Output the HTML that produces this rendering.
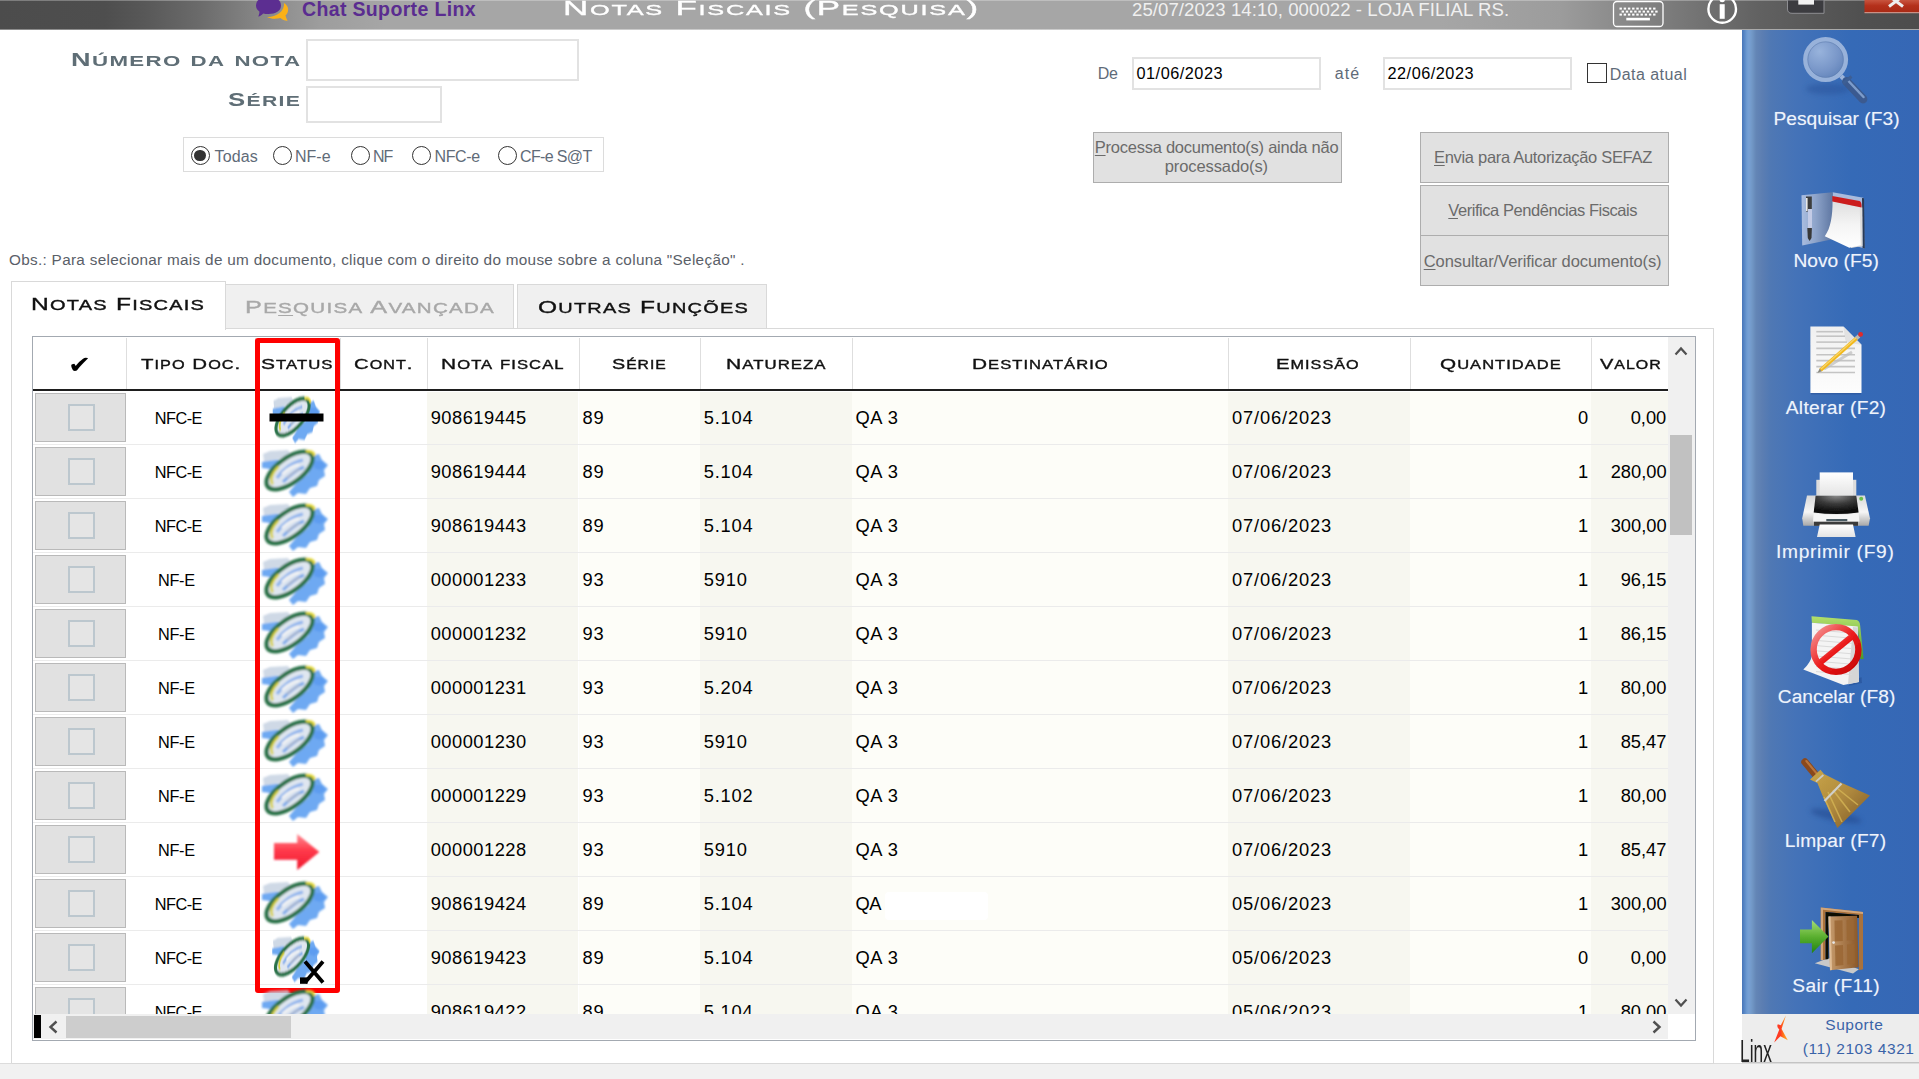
<!DOCTYPE html>
<html lang="pt-BR"><head><meta charset="utf-8"><title>Notas Fiscais (Pesquisa)</title>
<style>
html,body{margin:0;padding:0}
body{width:1919px;height:1079px;overflow:hidden;background:#fff;position:relative;font-family:"Liberation Sans",sans-serif}
.a{position:absolute;box-sizing:border-box}
.t{position:absolute;white-space:nowrap;line-height:0;height:0;transform-origin:0 0}
.t u{text-decoration-thickness:1px;text-underline-offset:2px}
#titlebar{left:0;top:0;width:1919px;height:29px;border-top:1px solid rgba(255,255,255,.28);background:linear-gradient(to right,#4c4c4c 0,#4e4e4e 105px,#585858 145px,#6b6b6b 200px,#878787 260px,#9d9d9d 320px,#a6a6a6 385px,#a6a6a6 1440px,#9c9c9c 1560px,#7e7e7e 1660px,#616161 1760px,#505050 1860px,#4d4d4d 1919px)}
#titleedge{left:0;top:29px;width:1919px;height:1px;background:linear-gradient(to right,#8c8c8c 0,#8d8d8d 105px,#9e9e9e 200px,#bcbcbc 280px,#cacaca 385px,#cbcbcb 1440px,#c4c4c4 1560px,#a9a9a9 1660px)}
.inp{background:#fff;border:2px solid #e2e2e2}
.btn{background:#e1e1e1;border:1px solid #adadad}
.radio{width:19px;height:19px;border-radius:50%;border:1.9px solid #333;background:#fff}
.tab{background:#f0f0f0;border:1px solid #d9d9d9;border-bottom:none}
#grid{left:32px;top:336px;width:1664px;height:705px;border:1px solid #a3a9b1;background:#fff;overflow:hidden}
.colbg{top:55px;height:623px}
.hsep{top:1px;width:1px;height:52px;background:#dedede}
.rsep{left:0;width:1635px;height:1px;background:#ebebeb}
.selcell{left:2px;width:91px;height:49px;background:#e1e1e1;border:1px solid #b9b9b9}
.selcell b{position:absolute;left:32px;top:10px;width:27px;height:27px;box-sizing:border-box;border:2px solid #bcc7ce;background:#e5e5e5}
.sb{background:#f0f0f0}
.z{z-index:3}
svg{position:absolute;overflow:visible}
</style></head><body>
<div id="titlebar" class="a"></div><div id="titleedge" class="a"></div>
<svg width="1919" height="30" viewBox="0 0 1919 30" style="left:0;top:0"><g filter="url(#soft2)"><defs><filter id="soft2"><feGaussianBlur stdDeviation="0.5"/></filter></defs><path d="M284 3 C289 6 289.5 12 285.5 15.5 C286 17.5 287 19.5 287.5 21 C284.5 20.5 282 19.5 280.5 18 C276 19.3 270.5 19 267 17 C275 17.5 285 12 284 3 Z" fill="#fbb117"/><path d="M256 5.5 C256 0 261 -3 268.4 -3 C275.8 -3 281 0 281 5.5 C281 11 275.8 14 268.4 14 C266.5 14 264.8 13.8 263.2 13.4 C262 15 260 16.2 258.2 16.5 C259 15 259.5 13.2 259.4 11.6 C257.2 10 256 8 256 5.5 Z" fill="#5c2d91"/></g><rect x="1613.5" y="1.5" width="49.5" height="25" rx="3.5" fill="none" stroke="#fff" stroke-width="1.3"/><rect x="1619.5" y="7.6" width="2.4" height="2" fill="#fff"/><rect x="1623.7" y="7.6" width="2.4" height="2" fill="#fff"/><rect x="1627.9" y="7.6" width="2.4" height="2" fill="#fff"/><rect x="1632.1" y="7.6" width="2.4" height="2" fill="#fff"/><rect x="1636.3" y="7.6" width="2.4" height="2" fill="#fff"/><rect x="1640.5" y="7.6" width="2.4" height="2" fill="#fff"/><rect x="1644.7" y="7.6" width="2.4" height="2" fill="#fff"/><rect x="1648.9" y="7.6" width="2.4" height="2" fill="#fff"/><rect x="1653.1" y="7.6" width="2.4" height="2" fill="#fff"/><rect x="1621.6" y="10.6" width="2.4" height="2" fill="#fff"/><rect x="1625.8" y="10.6" width="2.4" height="2" fill="#fff"/><rect x="1630.0" y="10.6" width="2.4" height="2" fill="#fff"/><rect x="1634.2" y="10.6" width="2.4" height="2" fill="#fff"/><rect x="1638.4" y="10.6" width="2.4" height="2" fill="#fff"/><rect x="1642.6" y="10.6" width="2.4" height="2" fill="#fff"/><rect x="1646.8" y="10.6" width="2.4" height="2" fill="#fff"/><rect x="1651.0" y="10.6" width="2.4" height="2" fill="#fff"/><rect x="1655.2" y="10.6" width="2.4" height="2" fill="#fff"/><rect x="1619.5" y="13.6" width="2.4" height="2" fill="#fff"/><rect x="1623.7" y="13.6" width="2.4" height="2" fill="#fff"/><rect x="1627.9" y="13.6" width="2.4" height="2" fill="#fff"/><rect x="1632.1" y="13.6" width="2.4" height="2" fill="#fff"/><rect x="1636.3" y="13.6" width="2.4" height="2" fill="#fff"/><rect x="1640.5" y="13.6" width="2.4" height="2" fill="#fff"/><rect x="1644.7" y="13.6" width="2.4" height="2" fill="#fff"/><rect x="1648.9" y="13.6" width="2.4" height="2" fill="#fff"/><rect x="1653.1" y="13.6" width="2.4" height="2" fill="#fff"/><rect x="1626.3" y="17.8" width="23.6" height="2.6" fill="#fff"/><circle cx="1722.2" cy="9" r="13.8" fill="none" stroke="#fff" stroke-width="2.4"/><rect x="1719.7" y="4.2" width="5" height="14.6" fill="#fff"/><circle cx="1722.2" cy="-0.6" r="2.8" fill="#fff"/><path d="M1787.5 0 L1787.5 9 Q1787.5 13.3 1792 13.3 L1824 13.3 L1824 0 Z" fill="#3c3c40" stroke="#8e8e92" stroke-width="1"/><rect x="1798.3" y="0" width="15.7" height="4.6" fill="#f2f2f2"/><defs><linearGradient id="clg" x1="0" y1="0" x2="0" y2="1"><stop offset="0" stop-color="#c8553f"/><stop offset=".45" stop-color="#b4301b"/><stop offset="1" stop-color="#a82a15"/></linearGradient></defs><rect x="1864.5" y="0" width="55" height="12.7" fill="url(#clg)"/><rect x="1864.5" y="12.2" width="55" height="1" fill="#d9a79d"/><path d="M1889 -4 L1903 6.5 M1903 -4 L1889 6.5" stroke="#eee" stroke-width="3" fill="none"/></svg>
<!-- form -->
<div class="a inp" style="left:306px;top:39px;width:273px;height:42px"></div>
<div class="a inp" style="left:306px;top:86px;width:136px;height:37px"></div>
<div class="a" style="left:183px;top:137px;width:421px;height:35px;border:1px solid #dcdcdc"></div>
<div class="a radio" style="left:190.5px;top:146px"></div><div class="a" style="left:194.2px;top:149.7px;width:11.6px;height:11.6px;border-radius:50%;background:#333"></div><div class="a radio" style="left:273.0px;top:146px"></div><div class="a radio" style="left:351.0px;top:146px"></div><div class="a radio" style="left:412.2px;top:146px"></div><div class="a radio" style="left:498.0px;top:146px"></div>
<div class="a inp" style="left:1132px;top:57px;width:189px;height:33px"></div>
<div class="a inp" style="left:1383px;top:57px;width:189px;height:33px"></div>
<div class="a" style="left:1587px;top:63px;width:20px;height:20px;border:1.6px solid #333;background:#fff"></div>
<div class="a btn" style="left:1093px;top:132px;width:249px;height:51px"></div>
<div class="a btn" style="left:1420px;top:132px;width:249px;height:51px"></div>
<div class="a btn" style="left:1420px;top:185px;width:249px;height:51px"></div>
<div class="a btn" style="left:1420px;top:235px;width:249px;height:51px"></div>
<!-- tabs -->
<div class="a" style="left:11px;top:328px;width:1703px;height:736px;border:1px solid #d9d9d9;background:#fff"></div>
<div class="a tab" style="left:225px;top:284px;width:289px;height:44px"></div>
<div class="a tab" style="left:517px;top:284px;width:250px;height:44px"></div>
<div class="a" style="left:11px;top:281px;width:215px;height:49px;border:1px solid #d9d9d9;border-bottom:none;background:#fff"></div>
<!-- grid -->
<div id="grid" class="a">
<div class="a colbg" style="left:394.2px;width:151.3px;background:#f7f7f0"></div><div class="a colbg" style="left:545.5px;width:121.0px;background:#fdfdf8"></div><div class="a colbg" style="left:666.5px;width:152.0px;background:#f7f7f0"></div><div class="a colbg" style="left:818.5px;width:376.5px;background:#fdfdf8"></div><div class="a colbg" style="left:1195.0px;width:182.0px;background:#f7f7f0"></div><div class="a colbg" style="left:1377.0px;width:181.0px;background:#fdfdf8"></div><div class="a colbg" style="left:1558.0px;width:77.0px;background:#f7f7f0"></div><div class="a hsep" style="left:93.0px"></div><div class="a hsep" style="left:222.0px"></div><div class="a hsep" style="left:307.0px"></div><div class="a hsep" style="left:394.2px"></div><div class="a hsep" style="left:545.5px"></div><div class="a hsep" style="left:666.5px"></div><div class="a hsep" style="left:818.5px"></div><div class="a hsep" style="left:1195.0px"></div><div class="a hsep" style="left:1377.0px"></div><div class="a hsep" style="left:1558.0px"></div><div class="a" style="left:0;top:52px;width:1635px;height:2px;background:#1e1e1e"></div><div class="a selcell" style="top:56px"><b></b></div><div class="a rsep" style="top:107px"></div><div class="a selcell" style="top:110px"><b></b></div><div class="a rsep" style="top:161px"></div><div class="a selcell" style="top:164px"><b></b></div><div class="a rsep" style="top:215px"></div><div class="a selcell" style="top:218px"><b></b></div><div class="a rsep" style="top:269px"></div><div class="a selcell" style="top:272px"><b></b></div><div class="a rsep" style="top:323px"></div><div class="a selcell" style="top:326px"><b></b></div><div class="a rsep" style="top:377px"></div><div class="a selcell" style="top:380px"><b></b></div><div class="a rsep" style="top:431px"></div><div class="a selcell" style="top:434px"><b></b></div><div class="a rsep" style="top:485px"></div><div class="a selcell" style="top:488px"><b></b></div><div class="a rsep" style="top:539px"></div><div class="a selcell" style="top:542px"><b></b></div><div class="a rsep" style="top:593px"></div><div class="a selcell" style="top:596px"><b></b></div><div class="a rsep" style="top:647px"></div><div class="a selcell" style="top:650px"><b></b></div><div class="a sb z" style="left:1635px;top:0;width:27px;height:677px"></div><div class="a z" style="left:1637px;top:98px;width:22px;height:100px;background:#c1c1c1"></div><div class="a z" style="left:0;top:677px;width:1662px;height:26px;background:#fff"></div><div class="a sb z" style="left:0;top:677px;width:1635px;height:25px"></div><div class="a z" style="left:1px;top:678px;width:7px;height:23px;background:#000"></div><div class="a z" style="left:33px;top:679px;width:225px;height:22px;background:#cdcdcd"></div><svg class="z" style="left:1640px;top:8px" width="16" height="12" viewBox="0 0 16 12"><path d="M2.5 9.5 L8 3.5 L13.5 9.5" fill="none" stroke="#505050" stroke-width="2.2"/></svg><svg class="z" style="left:1640px;top:660px" width="16" height="12" viewBox="0 0 16 12"><path d="M2.5 2.5 L8 8.5 L13.5 2.5" fill="none" stroke="#505050" stroke-width="2.2"/></svg><svg class="z" style="left:14px;top:682px" width="12" height="16" viewBox="0 0 12 16"><path d="M9.5 2.5 L3.5 8 L9.5 13.5" fill="none" stroke="#505050" stroke-width="2.4"/></svg><svg class="z" style="left:1618px;top:682px" width="12" height="16" viewBox="0 0 12 16"><path d="M2.5 2.5 L8.5 8 L2.5 13.5" fill="none" stroke="#505050" stroke-width="2.4"/></svg>
</div>
<div class="a" style="left:255px;top:338px;width:85px;height:655px;border:5px solid #ff0000;border-radius:3px"></div>
<!-- sidebar -->
<div class="a" style="left:1742px;top:30px;width:177px;height:984px;background:linear-gradient(to right,#4a76b8 0,#5584c4 2px,#709cd2 5px,#78a0d4 7px,#7298c6 10px,#6486b6 14px,#5c7eb2 20px,#4f78b4 29px,#4573b8 52px,#3d6fb8 78px,#356ab7 110px,#3667b5 178px)"></div>
<div class="a" style="left:1742px;top:1014px;width:177px;height:49px;background:#ededed;border-bottom:1px solid #c4c4c4"></div>
<div class="a" style="left:0;top:1064px;width:1919px;height:15px;background:#f1f1f1"></div>
<div class="a" style="left:0;top:1063px;width:12px;height:1px;background:#dcdcdc"></div>
<div class="a" style="left:1714px;top:1063px;width:205px;height:1px;background:#dcdcdc"></div>
<svg width="1919" height="1079" viewBox="0 0 1919 1079" style="left:0;top:0"><defs><filter id="soft" x="-10%" y="-10%" width="120%" height="120%"><feGaussianBlur stdDeviation="1.0"/></filter><linearGradient id="rarrow" x1="0" y1="0" x2="0" y2="1"><stop offset="0" stop-color="#ff8a92"/><stop offset=".45" stop-color="#ff3b4c"/><stop offset="1" stop-color="#f0152c"/></linearGradient></defs><g transform="translate(296.5 418.5) scale(0.720 0.980) translate(-33 -24)" filter="url(#soft)"><path d="M1 6 L8 3 L26 2 L30 8 L14 12 L2 14 Z" fill="#c3cfe0" opacity=".8"/><path d="M0 14 L14 12 L44 11 L50 8 L57 6 L60 12 L66 17 L62 22 L63 28 L57 32 L55 38 L48 40 L44 46 L36 45 L31 49 L27 44 L34 36 L46 26 L50 16 L30 19 L8 21 L0 20 Z" fill="#6ea9f2"/><path d="M52 13 L60 13 L64 18 L58 22 L52 20 Z" fill="#5d9cf0"/><ellipse cx="27.5" cy="22.5" rx="27" ry="12.4" transform="rotate(-36 27.5 22.5)" fill="#dfe6f0" stroke="#2b7248" stroke-width="4.3"/><path d="M8 38 C5 32 9 25 14 20" fill="none" stroke="#d6cf38" stroke-width="2.4" transform="translate(2.6 -1.6)"/><path d="M44 3.5 C49 2.5 52 4 52.5 8" fill="none" stroke="#e3d83c" stroke-width="2.6"/><path d="M15 30 C21 21 31 14 41 12" fill="none" stroke="#8fb4ec" stroke-width="3.2"/><path d="M21 34 C27 28 34 22 42 19" fill="none" stroke="#7eaaea" stroke-width="3"/><path d="M20 26 C25 21 31 17.5 37 16.5" fill="none" stroke="#f4f4f4" stroke-width="2.4"/><path d="M25 30 C29 26 33 23 38 21.5" fill="none" stroke="#b9bcc6" stroke-width="1.8"/></g><rect x="269.5" y="413.5" width="54" height="8" fill="#000"/><g transform="translate(295.0 472.0) scale(1.000 1.000) translate(-33 -24)" filter="url(#soft)"><path d="M1 6 L8 3 L26 2 L30 8 L14 12 L2 14 Z" fill="#c3cfe0" opacity=".8"/><path d="M0 14 L14 12 L44 11 L50 8 L57 6 L60 12 L66 17 L62 22 L63 28 L57 32 L55 38 L48 40 L44 46 L36 45 L31 49 L27 44 L34 36 L46 26 L50 16 L30 19 L8 21 L0 20 Z" fill="#6ea9f2"/><path d="M52 13 L60 13 L64 18 L58 22 L52 20 Z" fill="#5d9cf0"/><ellipse cx="27.5" cy="22.5" rx="27" ry="12.4" transform="rotate(-36 27.5 22.5)" fill="#dfe6f0" stroke="#2b7248" stroke-width="4.3"/><path d="M8 38 C5 32 9 25 14 20" fill="none" stroke="#d6cf38" stroke-width="2.4" transform="translate(2.6 -1.6)"/><path d="M44 3.5 C49 2.5 52 4 52.5 8" fill="none" stroke="#e3d83c" stroke-width="2.6"/><path d="M15 30 C21 21 31 14 41 12" fill="none" stroke="#8fb4ec" stroke-width="3.2"/><path d="M21 34 C27 28 34 22 42 19" fill="none" stroke="#7eaaea" stroke-width="3"/><path d="M20 26 C25 21 31 17.5 37 16.5" fill="none" stroke="#f4f4f4" stroke-width="2.4"/><path d="M25 30 C29 26 33 23 38 21.5" fill="none" stroke="#b9bcc6" stroke-width="1.8"/></g><g transform="translate(295.0 526.0) scale(1.000 1.000) translate(-33 -24)" filter="url(#soft)"><path d="M1 6 L8 3 L26 2 L30 8 L14 12 L2 14 Z" fill="#c3cfe0" opacity=".8"/><path d="M0 14 L14 12 L44 11 L50 8 L57 6 L60 12 L66 17 L62 22 L63 28 L57 32 L55 38 L48 40 L44 46 L36 45 L31 49 L27 44 L34 36 L46 26 L50 16 L30 19 L8 21 L0 20 Z" fill="#6ea9f2"/><path d="M52 13 L60 13 L64 18 L58 22 L52 20 Z" fill="#5d9cf0"/><ellipse cx="27.5" cy="22.5" rx="27" ry="12.4" transform="rotate(-36 27.5 22.5)" fill="#dfe6f0" stroke="#2b7248" stroke-width="4.3"/><path d="M8 38 C5 32 9 25 14 20" fill="none" stroke="#d6cf38" stroke-width="2.4" transform="translate(2.6 -1.6)"/><path d="M44 3.5 C49 2.5 52 4 52.5 8" fill="none" stroke="#e3d83c" stroke-width="2.6"/><path d="M15 30 C21 21 31 14 41 12" fill="none" stroke="#8fb4ec" stroke-width="3.2"/><path d="M21 34 C27 28 34 22 42 19" fill="none" stroke="#7eaaea" stroke-width="3"/><path d="M20 26 C25 21 31 17.5 37 16.5" fill="none" stroke="#f4f4f4" stroke-width="2.4"/><path d="M25 30 C29 26 33 23 38 21.5" fill="none" stroke="#b9bcc6" stroke-width="1.8"/></g><g transform="translate(295.0 580.0) scale(1.000 1.000) translate(-33 -24)" filter="url(#soft)"><path d="M1 6 L8 3 L26 2 L30 8 L14 12 L2 14 Z" fill="#c3cfe0" opacity=".8"/><path d="M0 14 L14 12 L44 11 L50 8 L57 6 L60 12 L66 17 L62 22 L63 28 L57 32 L55 38 L48 40 L44 46 L36 45 L31 49 L27 44 L34 36 L46 26 L50 16 L30 19 L8 21 L0 20 Z" fill="#6ea9f2"/><path d="M52 13 L60 13 L64 18 L58 22 L52 20 Z" fill="#5d9cf0"/><ellipse cx="27.5" cy="22.5" rx="27" ry="12.4" transform="rotate(-36 27.5 22.5)" fill="#dfe6f0" stroke="#2b7248" stroke-width="4.3"/><path d="M8 38 C5 32 9 25 14 20" fill="none" stroke="#d6cf38" stroke-width="2.4" transform="translate(2.6 -1.6)"/><path d="M44 3.5 C49 2.5 52 4 52.5 8" fill="none" stroke="#e3d83c" stroke-width="2.6"/><path d="M15 30 C21 21 31 14 41 12" fill="none" stroke="#8fb4ec" stroke-width="3.2"/><path d="M21 34 C27 28 34 22 42 19" fill="none" stroke="#7eaaea" stroke-width="3"/><path d="M20 26 C25 21 31 17.5 37 16.5" fill="none" stroke="#f4f4f4" stroke-width="2.4"/><path d="M25 30 C29 26 33 23 38 21.5" fill="none" stroke="#b9bcc6" stroke-width="1.8"/></g><g transform="translate(295.0 634.0) scale(1.000 1.000) translate(-33 -24)" filter="url(#soft)"><path d="M1 6 L8 3 L26 2 L30 8 L14 12 L2 14 Z" fill="#c3cfe0" opacity=".8"/><path d="M0 14 L14 12 L44 11 L50 8 L57 6 L60 12 L66 17 L62 22 L63 28 L57 32 L55 38 L48 40 L44 46 L36 45 L31 49 L27 44 L34 36 L46 26 L50 16 L30 19 L8 21 L0 20 Z" fill="#6ea9f2"/><path d="M52 13 L60 13 L64 18 L58 22 L52 20 Z" fill="#5d9cf0"/><ellipse cx="27.5" cy="22.5" rx="27" ry="12.4" transform="rotate(-36 27.5 22.5)" fill="#dfe6f0" stroke="#2b7248" stroke-width="4.3"/><path d="M8 38 C5 32 9 25 14 20" fill="none" stroke="#d6cf38" stroke-width="2.4" transform="translate(2.6 -1.6)"/><path d="M44 3.5 C49 2.5 52 4 52.5 8" fill="none" stroke="#e3d83c" stroke-width="2.6"/><path d="M15 30 C21 21 31 14 41 12" fill="none" stroke="#8fb4ec" stroke-width="3.2"/><path d="M21 34 C27 28 34 22 42 19" fill="none" stroke="#7eaaea" stroke-width="3"/><path d="M20 26 C25 21 31 17.5 37 16.5" fill="none" stroke="#f4f4f4" stroke-width="2.4"/><path d="M25 30 C29 26 33 23 38 21.5" fill="none" stroke="#b9bcc6" stroke-width="1.8"/></g><g transform="translate(295.0 688.0) scale(1.000 1.000) translate(-33 -24)" filter="url(#soft)"><path d="M1 6 L8 3 L26 2 L30 8 L14 12 L2 14 Z" fill="#c3cfe0" opacity=".8"/><path d="M0 14 L14 12 L44 11 L50 8 L57 6 L60 12 L66 17 L62 22 L63 28 L57 32 L55 38 L48 40 L44 46 L36 45 L31 49 L27 44 L34 36 L46 26 L50 16 L30 19 L8 21 L0 20 Z" fill="#6ea9f2"/><path d="M52 13 L60 13 L64 18 L58 22 L52 20 Z" fill="#5d9cf0"/><ellipse cx="27.5" cy="22.5" rx="27" ry="12.4" transform="rotate(-36 27.5 22.5)" fill="#dfe6f0" stroke="#2b7248" stroke-width="4.3"/><path d="M8 38 C5 32 9 25 14 20" fill="none" stroke="#d6cf38" stroke-width="2.4" transform="translate(2.6 -1.6)"/><path d="M44 3.5 C49 2.5 52 4 52.5 8" fill="none" stroke="#e3d83c" stroke-width="2.6"/><path d="M15 30 C21 21 31 14 41 12" fill="none" stroke="#8fb4ec" stroke-width="3.2"/><path d="M21 34 C27 28 34 22 42 19" fill="none" stroke="#7eaaea" stroke-width="3"/><path d="M20 26 C25 21 31 17.5 37 16.5" fill="none" stroke="#f4f4f4" stroke-width="2.4"/><path d="M25 30 C29 26 33 23 38 21.5" fill="none" stroke="#b9bcc6" stroke-width="1.8"/></g><g transform="translate(295.0 742.0) scale(1.000 1.000) translate(-33 -24)" filter="url(#soft)"><path d="M1 6 L8 3 L26 2 L30 8 L14 12 L2 14 Z" fill="#c3cfe0" opacity=".8"/><path d="M0 14 L14 12 L44 11 L50 8 L57 6 L60 12 L66 17 L62 22 L63 28 L57 32 L55 38 L48 40 L44 46 L36 45 L31 49 L27 44 L34 36 L46 26 L50 16 L30 19 L8 21 L0 20 Z" fill="#6ea9f2"/><path d="M52 13 L60 13 L64 18 L58 22 L52 20 Z" fill="#5d9cf0"/><ellipse cx="27.5" cy="22.5" rx="27" ry="12.4" transform="rotate(-36 27.5 22.5)" fill="#dfe6f0" stroke="#2b7248" stroke-width="4.3"/><path d="M8 38 C5 32 9 25 14 20" fill="none" stroke="#d6cf38" stroke-width="2.4" transform="translate(2.6 -1.6)"/><path d="M44 3.5 C49 2.5 52 4 52.5 8" fill="none" stroke="#e3d83c" stroke-width="2.6"/><path d="M15 30 C21 21 31 14 41 12" fill="none" stroke="#8fb4ec" stroke-width="3.2"/><path d="M21 34 C27 28 34 22 42 19" fill="none" stroke="#7eaaea" stroke-width="3"/><path d="M20 26 C25 21 31 17.5 37 16.5" fill="none" stroke="#f4f4f4" stroke-width="2.4"/><path d="M25 30 C29 26 33 23 38 21.5" fill="none" stroke="#b9bcc6" stroke-width="1.8"/></g><g transform="translate(295.0 796.0) scale(1.000 1.000) translate(-33 -24)" filter="url(#soft)"><path d="M1 6 L8 3 L26 2 L30 8 L14 12 L2 14 Z" fill="#c3cfe0" opacity=".8"/><path d="M0 14 L14 12 L44 11 L50 8 L57 6 L60 12 L66 17 L62 22 L63 28 L57 32 L55 38 L48 40 L44 46 L36 45 L31 49 L27 44 L34 36 L46 26 L50 16 L30 19 L8 21 L0 20 Z" fill="#6ea9f2"/><path d="M52 13 L60 13 L64 18 L58 22 L52 20 Z" fill="#5d9cf0"/><ellipse cx="27.5" cy="22.5" rx="27" ry="12.4" transform="rotate(-36 27.5 22.5)" fill="#dfe6f0" stroke="#2b7248" stroke-width="4.3"/><path d="M8 38 C5 32 9 25 14 20" fill="none" stroke="#d6cf38" stroke-width="2.4" transform="translate(2.6 -1.6)"/><path d="M44 3.5 C49 2.5 52 4 52.5 8" fill="none" stroke="#e3d83c" stroke-width="2.6"/><path d="M15 30 C21 21 31 14 41 12" fill="none" stroke="#8fb4ec" stroke-width="3.2"/><path d="M21 34 C27 28 34 22 42 19" fill="none" stroke="#7eaaea" stroke-width="3"/><path d="M20 26 C25 21 31 17.5 37 16.5" fill="none" stroke="#f4f4f4" stroke-width="2.4"/><path d="M25 30 C29 26 33 23 38 21.5" fill="none" stroke="#b9bcc6" stroke-width="1.8"/></g><path d="M274 843.1 L297.2 843.1 L297.2 833.9 L319.4 852 L297.2 870 L297.2 859.8 L274 859.8 Z" fill="url(#rarrow)" filter="url(#soft)"/><g transform="translate(295.0 904.0) scale(1.000 1.000) translate(-33 -24)" filter="url(#soft)"><path d="M1 6 L8 3 L26 2 L30 8 L14 12 L2 14 Z" fill="#c3cfe0" opacity=".8"/><path d="M0 14 L14 12 L44 11 L50 8 L57 6 L60 12 L66 17 L62 22 L63 28 L57 32 L55 38 L48 40 L44 46 L36 45 L31 49 L27 44 L34 36 L46 26 L50 16 L30 19 L8 21 L0 20 Z" fill="#6ea9f2"/><path d="M52 13 L60 13 L64 18 L58 22 L52 20 Z" fill="#5d9cf0"/><ellipse cx="27.5" cy="22.5" rx="27" ry="12.4" transform="rotate(-36 27.5 22.5)" fill="#dfe6f0" stroke="#2b7248" stroke-width="4.3"/><path d="M8 38 C5 32 9 25 14 20" fill="none" stroke="#d6cf38" stroke-width="2.4" transform="translate(2.6 -1.6)"/><path d="M44 3.5 C49 2.5 52 4 52.5 8" fill="none" stroke="#e3d83c" stroke-width="2.6"/><path d="M15 30 C21 21 31 14 41 12" fill="none" stroke="#8fb4ec" stroke-width="3.2"/><path d="M21 34 C27 28 34 22 42 19" fill="none" stroke="#7eaaea" stroke-width="3"/><path d="M20 26 C25 21 31 17.5 37 16.5" fill="none" stroke="#f4f4f4" stroke-width="2.4"/><path d="M25 30 C29 26 33 23 38 21.5" fill="none" stroke="#b9bcc6" stroke-width="1.8"/></g><g transform="translate(296.0 958.0) scale(0.720 0.960) translate(-33 -24)" filter="url(#soft)"><path d="M1 6 L8 3 L26 2 L30 8 L14 12 L2 14 Z" fill="#c3cfe0" opacity=".8"/><path d="M0 14 L14 12 L44 11 L50 8 L57 6 L60 12 L66 17 L62 22 L63 28 L57 32 L55 38 L48 40 L44 46 L36 45 L31 49 L27 44 L34 36 L46 26 L50 16 L30 19 L8 21 L0 20 Z" fill="#6ea9f2"/><path d="M52 13 L60 13 L64 18 L58 22 L52 20 Z" fill="#5d9cf0"/><ellipse cx="27.5" cy="22.5" rx="27" ry="12.4" transform="rotate(-36 27.5 22.5)" fill="#dfe6f0" stroke="#2b7248" stroke-width="4.3"/><path d="M8 38 C5 32 9 25 14 20" fill="none" stroke="#d6cf38" stroke-width="2.4" transform="translate(2.6 -1.6)"/><path d="M44 3.5 C49 2.5 52 4 52.5 8" fill="none" stroke="#e3d83c" stroke-width="2.6"/><path d="M15 30 C21 21 31 14 41 12" fill="none" stroke="#8fb4ec" stroke-width="3.2"/><path d="M21 34 C27 28 34 22 42 19" fill="none" stroke="#7eaaea" stroke-width="3"/><path d="M20 26 C25 21 31 17.5 37 16.5" fill="none" stroke="#f4f4f4" stroke-width="2.4"/><path d="M25 30 C29 26 33 23 38 21.5" fill="none" stroke="#b9bcc6" stroke-width="1.8"/></g><path d="M305 961.5 L323 982.5 M323 961.5 L305 982.5" stroke="#000" stroke-width="3.8" fill="none"/><rect x="300" y="977.4" width="7.6" height="6.4" fill="#000"/><g transform="translate(295.0 1012.0) scale(1.000 1.000) translate(-33 -24)" filter="url(#soft)"><path d="M1 6 L8 3 L26 2 L30 8 L14 12 L2 14 Z" fill="#c3cfe0" opacity=".8"/><path d="M0 14 L14 12 L44 11 L50 8 L57 6 L60 12 L66 17 L62 22 L63 28 L57 32 L55 38 L48 40 L44 46 L36 45 L31 49 L27 44 L34 36 L46 26 L50 16 L30 19 L8 21 L0 20 Z" fill="#6ea9f2"/><path d="M52 13 L60 13 L64 18 L58 22 L52 20 Z" fill="#5d9cf0"/><ellipse cx="27.5" cy="22.5" rx="27" ry="12.4" transform="rotate(-36 27.5 22.5)" fill="#dfe6f0" stroke="#2b7248" stroke-width="4.3"/><path d="M8 38 C5 32 9 25 14 20" fill="none" stroke="#d6cf38" stroke-width="2.4" transform="translate(2.6 -1.6)"/><path d="M44 3.5 C49 2.5 52 4 52.5 8" fill="none" stroke="#e3d83c" stroke-width="2.6"/><path d="M15 30 C21 21 31 14 41 12" fill="none" stroke="#8fb4ec" stroke-width="3.2"/><path d="M21 34 C27 28 34 22 42 19" fill="none" stroke="#7eaaea" stroke-width="3"/><path d="M20 26 C25 21 31 17.5 37 16.5" fill="none" stroke="#f4f4f4" stroke-width="2.4"/><path d="M25 30 C29 26 33 23 38 21.5" fill="none" stroke="#b9bcc6" stroke-width="1.8"/></g></svg><svg width="1919" height="1079" viewBox="0 0 1919 1079" style="left:0;top:0"><defs><filter id="b1" x="-20%" y="-20%" width="140%" height="140%"><feGaussianBlur stdDeviation="0.6"/></filter><filter id="b3" x="-30%" y="-50%" width="160%" height="200%"><feGaussianBlur stdDeviation="2.5"/></filter><radialGradient id="glass" cx=".35" cy=".3" r=".8"><stop offset="0" stop-color="#98b3dc"/><stop offset=".6" stop-color="#7896c8"/><stop offset="1" stop-color="#5c7fb6"/></radialGradient><linearGradient id="cov" x1="0" y1="0" x2="1" y2="0"><stop offset="0" stop-color="#a9bde0"/><stop offset=".45" stop-color="#8ea4ca"/><stop offset="1" stop-color="#5e77a2"/></linearGradient><linearGradient id="pad" x1="0" y1="0" x2="0" y2="1"><stop offset="0" stop-color="#dedede"/><stop offset=".5" stop-color="#f4f4f4"/><stop offset="1" stop-color="#ffffff"/></linearGradient><linearGradient id="doc" x1="0" y1="0" x2="0" y2="1"><stop offset="0" stop-color="#f0f0f0"/><stop offset="1" stop-color="#fdfdfd"/></linearGradient><linearGradient id="prb" x1="0" y1="0" x2="0" y2="1"><stop offset="0" stop-color="#d8d8d8"/><stop offset=".55" stop-color="#f6f6f6"/><stop offset="1" stop-color="#a8a8a8"/></linearGradient><radialGradient id="prk" cx=".5" cy="0" r=".9"><stop offset="0" stop-color="#8a8a8a"/><stop offset=".5" stop-color="#3a3a3a"/><stop offset="1" stop-color="#0a0a0a"/></radialGradient><linearGradient id="ppr" x1="0" y1="0" x2="0" y2="1"><stop offset="0" stop-color="#ffffff"/><stop offset="1" stop-color="#e4e4e4"/></linearGradient><linearGradient id="red" x1="0" y1="0" x2="1" y2="1"><stop offset="0" stop-color="#f59a9a"/><stop offset=".5" stop-color="#ec1c1c"/><stop offset="1" stop-color="#c40000"/></linearGradient><linearGradient id="grn" x1="0" y1="0" x2="0" y2="1"><stop offset="0" stop-color="#b2df6a"/><stop offset="1" stop-color="#4c9a2a"/></linearGradient><linearGradient id="straw" x1="0" y1="0" x2="1" y2="1"><stop offset="0" stop-color="#c9a648"/><stop offset=".5" stop-color="#b08a3e"/><stop offset="1" stop-color="#7a5626"/></linearGradient><linearGradient id="wood" x1="0" y1="0" x2="1" y2="0"><stop offset="0" stop-color="#c79c6e"/><stop offset="1" stop-color="#8a5728"/></linearGradient><linearGradient id="garrow" x1="0" y1="0" x2="0" y2="1"><stop offset="0" stop-color="#a6dc78"/><stop offset=".5" stop-color="#5cb030"/><stop offset="1" stop-color="#1f8410"/></linearGradient></defs><ellipse cx="1828" cy="89" rx="22" ry="5.5" fill="#2c559c" opacity=".55" filter="url(#b3)"/><g filter="url(#b1)"><path d="M1841 76 L1847 82" stroke="#9cb4da" stroke-width="4.5" fill="none"/><path d="M1846.5 81.5 L1863 99" stroke="#3a5a90" stroke-width="8.8" stroke-linecap="round" fill="none"/><path d="M1848 80.5 L1863.5 97" stroke="#7d9cca" stroke-width="2.5" stroke-linecap="round" fill="none"/><path d="M1843 83.5 L1851.5 76.5" stroke="#3d5e94" stroke-width="3" fill="none"/><circle cx="1825.6" cy="59.6" r="20.2" fill="url(#glass)" stroke="#98b2da" stroke-width="4.6"/><circle cx="1825.6" cy="59.6" r="17.8" fill="none" stroke="#5878aa" stroke-width=".8" opacity=".7"/></g><g filter="url(#b1)"><path d="M1832.6 192.2 L1863.4 197.8 L1864.5 248.6 L1832.6 239.3 Z" fill="#a9bbdc"/><path d="M1862 198 L1864 198.3 L1864.8 248.6 L1862.6 248 Z" fill="#2b3a55"/><path d="M1801.5 195.2 L1832.6 192.2 L1832.6 239.3 L1802.2 245.6 Z" fill="url(#cov)"/><path d="M1856 206 L1862.3 207.5 L1862.5 246 L1851 248 Z" fill="#dcdcdc"/><path d="M1832.6 201.1 L1859.7 207 L1860.8 245.2 L1849.3 247.8 L1824.8 236.3 C1831 228 1832.6 215 1832.6 201.1 Z" fill="url(#pad)"/><path d="M1832.3 196 L1859.5 201 Q1862 202 1861.5 207.5 L1832.3 201.6 Z" fill="#cc1f1f"/><rect x="1806" y="196.5" width="5.8" height="15" fill="#3c3c3c"/><rect x="1808" y="209" width="4" height="20" fill="#c3cbe6"/><path d="M1807.3 228 L1811.9 228 L1811.5 238 L1809.6 241 L1807.8 238 Z" fill="#383838"/><rect x="1806" y="198" width="1.6" height="13" fill="#e8e8e8"/></g><rect x="1811" y="391.5" width="50" height="3" fill="#2a4f93" opacity=".5" filter="url(#b1)"/><g filter="url(#b1)"><path d="M1810.4 326.5 L1843.4 326.5 L1861.5 344.7 L1861.5 392.9 L1810.4 392.9 Z" fill="url(#doc)"/><path d="M1843.4 326.5 L1861.5 344.7 L1849 343 Q1845 342 1845 338 Z" fill="#e2e2e2"/><path d="M1816.3 331.7 L1843 331.7" stroke="#c4c4c4" stroke-width="1.6"/><path d="M1816.3 336.2 L1845 336.2" stroke="#c4c4c4" stroke-width="1.6"/><path d="M1816.3 342.1 L1847 342.1" stroke="#c4c4c4" stroke-width="1.6"/><path d="M1816.3 348.4 L1855 348.4" stroke="#c4c4c4" stroke-width="1.6"/><path d="M1816.3 354.7 L1855 354.7" stroke="#c4c4c4" stroke-width="1.6"/><path d="M1816.3 360.6 L1855 360.6" stroke="#c4c4c4" stroke-width="1.6"/><path d="M1816.3 366.6 L1855 366.6" stroke="#c4c4c4" stroke-width="1.6"/><path d="M1816.3 372.5 L1855 372.5" stroke="#c4c4c4" stroke-width="1.6"/><path d="M1824 369 L1852 352" stroke="#bdbdbd" stroke-width="3" opacity=".7"/><path d="M1820.5 370.2 L1857 337.8" stroke="#f2b91e" stroke-width="3.8"/><path d="M1821 369 L1857.2 336.8" stroke="#f8d46a" stroke-width="1.2"/><path d="M1817.4 372.9 L1821.8 371.2 L1819.6 368.8 Z" fill="#8a8a80"/><path d="M1856.3 338.4 L1859 336" stroke="#b8b8b8" stroke-width="3.8"/><circle cx="1860.6" cy="334.4" r="2.4" fill="#e02a2a"/></g><g filter="url(#b1)"><rect x="1816.3" y="479.8" width="40" height="16" fill="#dcdcdc"/><rect x="1819.7" y="472.4" width="33.3" height="23.4" fill="url(#ppr)"/><path d="M1807 495.4 L1864.9 495.4 L1870 518.3 L1868.6 525.7 L1803.3 525.7 L1802.2 518.3 Z" fill="url(#prb)"/><path d="M1815.6 495.7 L1856.3 495.7 L1858.6 512.4 Q1836 515.5 1813.7 512.4 Z" fill="url(#prk)"/><path d="M1813.7 513.3 Q1836 516.5 1858.6 513.3 L1859.5 521.5 L1813 521.5 Z" fill="#f6f6f6"/><rect x="1826.3" y="519" width="21" height="2.2" fill="#4a5a62"/><rect x="1814" y="521.8" width="44" height="4" fill="#3a3a3a"/><path d="M1819.7 524.6 L1853 524.6 L1855.6 536.9 L1817 536.9 Z" fill="url(#ppr)"/><circle cx="1861.2" cy="498.7" r="2" fill="#6cc04a"/></g><g filter="url(#b1)"><path d="M1811.5 616.2 L1856.7 619.9 Q1860 621 1860.2 626 L1863.6 659.1 L1860.4 659.1 L1857.8 627.3 L1811.9 622.8 Z" fill="url(#grn)"/><path d="M1855 680 L1861.5 677 L1862 683 L1848 686 Z" fill="#244c90" opacity=".5"/><path d="M1811.9 622.8 L1857.8 626.5 L1858.9 682.1 L1843.4 685.1 L1803.3 669.5 Q1811 662 1811.9 655.4 Z" fill="#f4f4f4"/><path d="M1853 627 L1857.8 627.4 L1858.9 682.1 L1848 684.2 Z" fill="#d6d6d6"/><path d="M1816 630.0 L1852 633.0" stroke="#dadada" stroke-width="1"/><path d="M1816 635.2 L1852 638.2" stroke="#dadada" stroke-width="1"/><path d="M1816 640.4 L1852 643.4" stroke="#dadada" stroke-width="1"/><path d="M1816 645.6 L1852 648.6" stroke="#dadada" stroke-width="1"/><path d="M1816 650.8 L1852 653.8" stroke="#dadada" stroke-width="1"/><path d="M1816 656.0 L1852 659.0" stroke="#dadada" stroke-width="1"/><path d="M1816 661.2 L1852 664.2" stroke="#dadada" stroke-width="1"/><path d="M1816 666.4 L1852 669.4" stroke="#dadada" stroke-width="1"/><path d="M1816 671.6 L1852 674.6" stroke="#dadada" stroke-width="1"/><circle cx="1836" cy="649.5" r="22.4" fill="none" stroke="url(#red)" stroke-width="6.4"/><path d="M1820.3 662.4 L1851.8 636.6" stroke="url(#red)" stroke-width="6.2"/></g><ellipse cx="1836" cy="816" rx="26" ry="5" fill="#23478c" opacity=".55" filter="url(#b3)" transform="rotate(12 1836 816)"/><g filter="url(#b1)"><path d="M1805 762 L1817 776.5" stroke="#8a491d" stroke-width="7.4" stroke-linecap="round"/><path d="M1806.3 761 L1817.5 774.5" stroke="#b9743a" stroke-width="2" stroke-linecap="round"/><path d="M1810 779.4 L1820.4 769.8 L1824 774 L1841.9 783.1 L1870 795.4 L1837.4 828 L1824.1 799.4 L1817.4 783.1 Z" fill="url(#straw)"/><path d="M1828 792 L1842 822 M1833 790 L1850 812 M1838 789 L1858 805 M1824 797 L1835 822" stroke="#d4b455" stroke-width="1.6" opacity=".8" fill="none"/><path d="M1815.9 781.7 L1823.4 775" stroke="#c9c9c4" stroke-width="1.8"/><path d="M1824.5 800.9 L1841.5 783.5" stroke="#cfcfca" stroke-width="2.2"/></g><g filter="url(#b1)"><path d="M1814.8 963.2 L1828.5 958 L1858.9 969.2 L1853 973.6 Z" fill="#c9c9c9"/><path d="M1820.8 907.6 L1863 912.1 L1863 969.2 L1858.9 970.3 L1858.9 915 L1825.6 912.1 L1825.6 959.5 L1820.8 960.3 Z" fill="#a9723c"/><path d="M1820.8 907.6 L1863 912.1 L1863 914 L1823 909.8 L1823 960 L1820.8 960.3 Z" fill="#d3a67a"/><path d="M1825.6 912.1 L1858.9 915 L1858.9 918 L1828.5 916.5 L1828.5 959 L1825.6 959.5 Z" fill="#0a0805"/><path d="M1828.5 916.5 L1857.1 915.8 L1858.6 967.3 L1830 970.3 Z" fill="url(#wood)"/><path d="M1834.5 920.5 L1842.5 920.2 L1842.8 941 L1834.8 941.6 Z M1846.5 920 L1853.8 919.8 L1854.2 940 L1846.8 940.6 Z M1835 945.5 L1843 945 L1843.4 965 L1835.5 966 Z M1847 944.5 L1854.3 944 L1854.8 963.5 L1847.4 964.5 Z" fill="#9a6634" opacity=".85"/><path d="M1828.5 916.5 L1830.6 916.5 L1832 970 L1830 970.3 Z" fill="#e0bd96"/><circle cx="1833.6" cy="942.6" r="1.4" fill="#e6e6e6"/><path d="M1800 929.5 L1811.9 929.5 L1811.9 919.9 L1828.5 936.5 L1811.9 953.2 L1811.9 943.2 L1800 943.2 Z" fill="url(#garrow)"/></g><defs><linearGradient id="lx" x1="0" y1="0" x2="1" y2="0"><stop offset=".45" stop-color="#ff3a20"/><stop offset=".75" stop-color="#ff8a1e"/><stop offset="1" stop-color="#ffab2a"/></linearGradient></defs><path d="M1785.9 1015.5 L1781.6 1029 L1787.8 1040.3 L1780.4 1036.2 L1774.2 1042.5 L1779.3 1029.6 Q1776.3 1027 1777.8 1024.3 L1780.8 1025.2 Z" fill="url(#lx)" filter="url(#b1)"/></svg>
<div class="t" style="left:302.00px;top:9.30px;font-size:19.50px;color:#5a2c90;font-weight:bold;letter-spacing:0.350px;">Chat Suporte Linx</div>
<div class="t" style="left:562.84px;top:8.20px;font-size:21.08px;color:#fff;transform:scaleX(1.6581);letter-spacing:.05em;-webkit-text-stroke:.35px currentColor;">N<span style="font-size:15.26px">OTAS</span> F<span style="font-size:15.26px">ISCAIS</span> (P<span style="font-size:15.26px">ESQUISA</span>)</div>
<div class="t" style="left:1132.00px;top:10.30px;font-size:18.60px;color:#f0f0f0;letter-spacing:0.061px;">25/07/2023 14:10, 000022 - LOJA FILIAL RS.</div>
<div class="t" style="left:70.50px;top:60.00px;font-size:18.02px;color:#5f6e76;font-weight:bold;transform:scaleX(1.5033);letter-spacing:.05em;-webkit-text-stroke:0 currentColor;">N<span style="font-size:14.83px">ÚMERO</span> <span style="font-size:14.83px">DA</span> <span style="font-size:14.83px">NOTA</span></div>
<div class="t" style="left:227.57px;top:100.40px;font-size:18.02px;color:#5f6e76;font-weight:bold;transform:scaleX(1.4286);letter-spacing:.05em;-webkit-text-stroke:0 currentColor;">S<span style="font-size:14.83px">ÉRIE</span></div>
<div class="t" style="left:214.50px;top:156.50px;font-size:16.00px;color:#5f6b78;letter-spacing:0.125px;">Todas</div>
<div class="t" style="left:295.00px;top:156.50px;font-size:16.00px;color:#5f6b78;letter-spacing:0.000px;">NF-e</div>
<div class="t" style="left:373.00px;top:156.50px;font-size:16.00px;color:#5f6b78;letter-spacing:-1.000px;">NF</div>
<div class="t" style="left:434.50px;top:156.50px;font-size:16.00px;color:#5f6b78;letter-spacing:-0.375px;">NFC-e</div>
<div class="t" style="left:520.00px;top:156.50px;font-size:16.00px;color:#5f6b78;letter-spacing:-0.643px;">CF-e S@T</div>
<div class="t" style="left:1097.75px;top:73.50px;font-size:16.00px;color:#5f6b78;letter-spacing:-0.250px;">De</div>
<div class="t" style="left:1334.75px;top:73.50px;font-size:16.00px;color:#5f6b78;letter-spacing:1.125px;">até</div>
<div class="t" style="left:1136.50px;top:72.50px;font-size:16.30px;color:#000;letter-spacing:0.500px;">01/06/2023</div>
<div class="t" style="left:1387.50px;top:72.50px;font-size:16.30px;color:#000;letter-spacing:0.500px;">22/06/2023</div>
<div class="t" style="left:1609.75px;top:74.50px;font-size:16.00px;color:#5f6b78;letter-spacing:0.444px;">Data atual</div>
<div class="t" style="left:1094.80px;top:146.50px;font-size:16.50px;color:#6b6b6b;letter-spacing:-0.250px;"><u>P</u>rocessa documento(s) ainda não</div>
<div class="t" style="left:1164.80px;top:166.20px;font-size:16.50px;color:#6b6b6b;letter-spacing:-0.108px;">processado(s)</div>
<div class="t" style="left:1434.00px;top:157.30px;font-size:16.50px;color:#6b6b6b;letter-spacing:-0.307px;"><u>E</u>nvia para Autorização SEFAZ</div>
<div class="t" style="left:1448.30px;top:209.80px;font-size:16.50px;color:#6b6b6b;letter-spacing:-0.446px;"><u>V</u>erifica Pendências Fiscais</div>
<div class="t" style="left:1423.70px;top:260.70px;font-size:16.50px;color:#6b6b6b;letter-spacing:-0.077px;"><u>C</u>onsultar/Verificar documento(s)</div>
<div class="t" style="left:9.00px;top:260.00px;font-size:15.30px;color:#5a6068;letter-spacing:0.303px;">Obs.: Para selecionar mais de um documento, clique com o direito do mouse sobre a coluna "Seleção" .</div>
<div class="t" style="left:30.87px;top:304.40px;font-size:17.15px;color:#111;transform:scaleX(1.4345);letter-spacing:.05em;-webkit-text-stroke:.35px currentColor;">N<span style="font-size:13.95px">OTAS</span> F<span style="font-size:13.95px">ISCAIS</span></div>
<div class="t" style="left:245.43px;top:306.80px;font-size:17.15px;color:#a8a8a8;transform:scaleX(1.4744);letter-spacing:.05em;-webkit-text-stroke:.35px currentColor;">P<span style="font-size:13.95px">E<u>S</u>QUISA</span> A<span style="font-size:13.95px">VANÇADA</span></div>
<div class="t" style="left:537.70px;top:306.80px;font-size:17.15px;color:#111;transform:scaleX(1.4308);letter-spacing:.05em;-webkit-text-stroke:.35px currentColor;">O<span style="font-size:13.95px">UTRAS</span> F<span style="font-size:13.95px">UNÇÕES</span></div>
<div class="t" style="left:141.25px;top:364.20px;font-size:14.97px;color:#111;transform:scaleX(1.3660);letter-spacing:.05em;-webkit-text-stroke:.35px currentColor;">T<span style="font-size:11.92px">IPO</span> D<span style="font-size:11.92px">OC</span>.</div>
<div class="t" style="left:260.80px;top:364.20px;font-size:14.97px;color:#111;transform:scaleX(1.4020);letter-spacing:.05em;-webkit-text-stroke:.35px currentColor;">S<span style="font-size:11.92px">TATUS</span></div>
<div class="t" style="left:353.90px;top:364.20px;font-size:14.97px;color:#111;transform:scaleX(1.3548);letter-spacing:.05em;-webkit-text-stroke:.35px currentColor;">C<span style="font-size:11.92px">ONT</span>.</div>
<div class="t" style="left:440.60px;top:364.20px;font-size:14.97px;color:#111;transform:scaleX(1.3966);letter-spacing:.05em;-webkit-text-stroke:.35px currentColor;">N<span style="font-size:11.92px">OTA</span> <span style="font-size:11.92px">FISCAL</span></div>
<div class="t" style="left:612.20px;top:364.20px;font-size:14.97px;color:#111;transform:scaleX(1.3171);letter-spacing:.05em;-webkit-text-stroke:.35px currentColor;">S<span style="font-size:11.92px">ÉRIE</span></div>
<div class="t" style="left:725.89px;top:364.20px;font-size:14.97px;color:#111;transform:scaleX(1.4071);letter-spacing:.05em;-webkit-text-stroke:.35px currentColor;">N<span style="font-size:11.92px">ATUREZA</span></div>
<div class="t" style="left:972.31px;top:364.20px;font-size:14.97px;color:#111;transform:scaleX(1.3917);letter-spacing:.05em;-webkit-text-stroke:.35px currentColor;">D<span style="font-size:11.92px">ESTINATÁRIO</span></div>
<div class="t" style="left:1276.14px;top:364.20px;font-size:14.97px;color:#111;transform:scaleX(1.3600);letter-spacing:.05em;-webkit-text-stroke:.35px currentColor;">E<span style="font-size:11.92px">MISSÃO</span></div>
<div class="t" style="left:1440.20px;top:364.20px;font-size:14.97px;color:#111;transform:scaleX(1.3839);letter-spacing:.05em;-webkit-text-stroke:.35px currentColor;">Q<span style="font-size:11.92px">UANTIDADE</span></div>
<div class="t" style="left:1599.80px;top:364.20px;font-size:14.97px;color:#111;transform:scaleX(1.3378);letter-spacing:.05em;-webkit-text-stroke:.35px currentColor;">V<span style="font-size:11.92px">ALOR</span></div>
<div class="t" style="left:67.75px;top:365.30px;font-size:24.00px;color:#000;transform:scaleX(1.1500);font-family:&quot;DejaVu Sans&quot;,sans-serif;">✔</div>
<div class="t" style="left:154.70px;top:418.00px;font-size:16.30px;color:#000;letter-spacing:-0.500px;">NFC-E</div>
<div class="t" style="left:430.70px;top:418.00px;font-size:18.30px;color:#000;letter-spacing:0.500px;">908619445</div>
<div class="t" style="left:582.40px;top:418.00px;font-size:18.30px;color:#000;letter-spacing:1.000px;">89</div>
<div class="t" style="left:703.70px;top:418.00px;font-size:18.30px;color:#000;letter-spacing:0.825px;">5.104</div>
<div class="t" style="left:855.50px;top:418.00px;font-size:18.30px;color:#000;letter-spacing:0.600px;">QA 3</div>
<div class="t" style="left:1232.00px;top:418.00px;font-size:18.30px;color:#000;letter-spacing:0.844px;">07/06/2023</div>
<div class="t" style="left:1578.00px;top:418.00px;font-size:18.30px;color:#000;">0</div>
<div class="t" style="left:1630.70px;top:418.00px;font-size:18.30px;color:#000;">0,00</div>
<div class="t" style="left:154.70px;top:472.00px;font-size:16.30px;color:#000;letter-spacing:-0.500px;">NFC-E</div>
<div class="t" style="left:430.70px;top:472.00px;font-size:18.30px;color:#000;letter-spacing:0.500px;">908619444</div>
<div class="t" style="left:582.40px;top:472.00px;font-size:18.30px;color:#000;letter-spacing:1.000px;">89</div>
<div class="t" style="left:703.70px;top:472.00px;font-size:18.30px;color:#000;letter-spacing:0.825px;">5.104</div>
<div class="t" style="left:855.50px;top:472.00px;font-size:18.30px;color:#000;letter-spacing:0.600px;">QA 3</div>
<div class="t" style="left:1232.00px;top:472.00px;font-size:18.30px;color:#000;letter-spacing:0.844px;">07/06/2023</div>
<div class="t" style="left:1578.00px;top:472.00px;font-size:18.30px;color:#000;">1</div>
<div class="t" style="left:1610.70px;top:472.00px;font-size:18.30px;color:#000;">280,00</div>
<div class="t" style="left:154.70px;top:526.00px;font-size:16.30px;color:#000;letter-spacing:-0.500px;">NFC-E</div>
<div class="t" style="left:430.70px;top:526.00px;font-size:18.30px;color:#000;letter-spacing:0.500px;">908619443</div>
<div class="t" style="left:582.40px;top:526.00px;font-size:18.30px;color:#000;letter-spacing:1.000px;">89</div>
<div class="t" style="left:703.70px;top:526.00px;font-size:18.30px;color:#000;letter-spacing:0.825px;">5.104</div>
<div class="t" style="left:855.50px;top:526.00px;font-size:18.30px;color:#000;letter-spacing:0.600px;">QA 3</div>
<div class="t" style="left:1232.00px;top:526.00px;font-size:18.30px;color:#000;letter-spacing:0.844px;">07/06/2023</div>
<div class="t" style="left:1578.00px;top:526.00px;font-size:18.30px;color:#000;">1</div>
<div class="t" style="left:1610.70px;top:526.00px;font-size:18.30px;color:#000;">300,00</div>
<div class="t" style="left:158.00px;top:580.00px;font-size:16.30px;color:#000;letter-spacing:-0.333px;">NF-E</div>
<div class="t" style="left:430.70px;top:580.00px;font-size:18.30px;color:#000;letter-spacing:0.500px;">000001233</div>
<div class="t" style="left:582.40px;top:580.00px;font-size:18.30px;color:#000;letter-spacing:1.000px;">93</div>
<div class="t" style="left:703.70px;top:580.00px;font-size:18.30px;color:#000;letter-spacing:0.867px;">5910</div>
<div class="t" style="left:855.50px;top:580.00px;font-size:18.30px;color:#000;letter-spacing:0.600px;">QA 3</div>
<div class="t" style="left:1232.00px;top:580.00px;font-size:18.30px;color:#000;letter-spacing:0.844px;">07/06/2023</div>
<div class="t" style="left:1578.00px;top:580.00px;font-size:18.30px;color:#000;">1</div>
<div class="t" style="left:1620.70px;top:580.00px;font-size:18.30px;color:#000;">96,15</div>
<div class="t" style="left:158.00px;top:634.00px;font-size:16.30px;color:#000;letter-spacing:-0.333px;">NF-E</div>
<div class="t" style="left:430.70px;top:634.00px;font-size:18.30px;color:#000;letter-spacing:0.500px;">000001232</div>
<div class="t" style="left:582.40px;top:634.00px;font-size:18.30px;color:#000;letter-spacing:1.000px;">93</div>
<div class="t" style="left:703.70px;top:634.00px;font-size:18.30px;color:#000;letter-spacing:0.867px;">5910</div>
<div class="t" style="left:855.50px;top:634.00px;font-size:18.30px;color:#000;letter-spacing:0.600px;">QA 3</div>
<div class="t" style="left:1232.00px;top:634.00px;font-size:18.30px;color:#000;letter-spacing:0.844px;">07/06/2023</div>
<div class="t" style="left:1578.00px;top:634.00px;font-size:18.30px;color:#000;">1</div>
<div class="t" style="left:1620.70px;top:634.00px;font-size:18.30px;color:#000;">86,15</div>
<div class="t" style="left:158.00px;top:688.00px;font-size:16.30px;color:#000;letter-spacing:-0.333px;">NF-E</div>
<div class="t" style="left:430.70px;top:688.00px;font-size:18.30px;color:#000;letter-spacing:0.500px;">000001231</div>
<div class="t" style="left:582.40px;top:688.00px;font-size:18.30px;color:#000;letter-spacing:1.000px;">93</div>
<div class="t" style="left:703.70px;top:688.00px;font-size:18.30px;color:#000;letter-spacing:0.825px;">5.204</div>
<div class="t" style="left:855.50px;top:688.00px;font-size:18.30px;color:#000;letter-spacing:0.600px;">QA 3</div>
<div class="t" style="left:1232.00px;top:688.00px;font-size:18.30px;color:#000;letter-spacing:0.844px;">07/06/2023</div>
<div class="t" style="left:1578.00px;top:688.00px;font-size:18.30px;color:#000;">1</div>
<div class="t" style="left:1620.70px;top:688.00px;font-size:18.30px;color:#000;">80,00</div>
<div class="t" style="left:158.00px;top:742.00px;font-size:16.30px;color:#000;letter-spacing:-0.333px;">NF-E</div>
<div class="t" style="left:430.70px;top:742.00px;font-size:18.30px;color:#000;letter-spacing:0.500px;">000001230</div>
<div class="t" style="left:582.40px;top:742.00px;font-size:18.30px;color:#000;letter-spacing:1.000px;">93</div>
<div class="t" style="left:703.70px;top:742.00px;font-size:18.30px;color:#000;letter-spacing:0.867px;">5910</div>
<div class="t" style="left:855.50px;top:742.00px;font-size:18.30px;color:#000;letter-spacing:0.600px;">QA 3</div>
<div class="t" style="left:1232.00px;top:742.00px;font-size:18.30px;color:#000;letter-spacing:0.844px;">07/06/2023</div>
<div class="t" style="left:1578.00px;top:742.00px;font-size:18.30px;color:#000;">1</div>
<div class="t" style="left:1620.70px;top:742.00px;font-size:18.30px;color:#000;">85,47</div>
<div class="t" style="left:158.00px;top:796.00px;font-size:16.30px;color:#000;letter-spacing:-0.333px;">NF-E</div>
<div class="t" style="left:430.70px;top:796.00px;font-size:18.30px;color:#000;letter-spacing:0.500px;">000001229</div>
<div class="t" style="left:582.40px;top:796.00px;font-size:18.30px;color:#000;letter-spacing:1.000px;">93</div>
<div class="t" style="left:703.70px;top:796.00px;font-size:18.30px;color:#000;letter-spacing:0.825px;">5.102</div>
<div class="t" style="left:855.50px;top:796.00px;font-size:18.30px;color:#000;letter-spacing:0.600px;">QA 3</div>
<div class="t" style="left:1232.00px;top:796.00px;font-size:18.30px;color:#000;letter-spacing:0.844px;">07/06/2023</div>
<div class="t" style="left:1578.00px;top:796.00px;font-size:18.30px;color:#000;">1</div>
<div class="t" style="left:1620.70px;top:796.00px;font-size:18.30px;color:#000;">80,00</div>
<div class="t" style="left:158.00px;top:850.00px;font-size:16.30px;color:#000;letter-spacing:-0.333px;">NF-E</div>
<div class="t" style="left:430.70px;top:850.00px;font-size:18.30px;color:#000;letter-spacing:0.500px;">000001228</div>
<div class="t" style="left:582.40px;top:850.00px;font-size:18.30px;color:#000;letter-spacing:1.000px;">93</div>
<div class="t" style="left:703.70px;top:850.00px;font-size:18.30px;color:#000;letter-spacing:0.867px;">5910</div>
<div class="t" style="left:855.50px;top:850.00px;font-size:18.30px;color:#000;letter-spacing:0.600px;">QA 3</div>
<div class="t" style="left:1232.00px;top:850.00px;font-size:18.30px;color:#000;letter-spacing:0.844px;">07/06/2023</div>
<div class="t" style="left:1578.00px;top:850.00px;font-size:18.30px;color:#000;">1</div>
<div class="t" style="left:1620.70px;top:850.00px;font-size:18.30px;color:#000;">85,47</div>
<div class="t" style="left:154.70px;top:904.00px;font-size:16.30px;color:#000;letter-spacing:-0.500px;">NFC-E</div>
<div class="t" style="left:430.70px;top:904.00px;font-size:18.30px;color:#000;letter-spacing:0.500px;">908619424</div>
<div class="t" style="left:582.40px;top:904.00px;font-size:18.30px;color:#000;letter-spacing:1.000px;">89</div>
<div class="t" style="left:703.70px;top:904.00px;font-size:18.30px;color:#000;letter-spacing:0.825px;">5.104</div>
<div class="t" style="left:855.50px;top:904.00px;font-size:18.30px;color:#000;letter-spacing:-0.500px;">QA</div>
<div class="t" style="left:1232.00px;top:904.00px;font-size:18.30px;color:#000;letter-spacing:0.844px;">05/06/2023</div>
<div class="t" style="left:1578.00px;top:904.00px;font-size:18.30px;color:#000;">1</div>
<div class="t" style="left:1610.70px;top:904.00px;font-size:18.30px;color:#000;">300,00</div>
<div class="t" style="left:154.70px;top:958.00px;font-size:16.30px;color:#000;letter-spacing:-0.500px;">NFC-E</div>
<div class="t" style="left:430.70px;top:958.00px;font-size:18.30px;color:#000;letter-spacing:0.500px;">908619423</div>
<div class="t" style="left:582.40px;top:958.00px;font-size:18.30px;color:#000;letter-spacing:1.000px;">89</div>
<div class="t" style="left:703.70px;top:958.00px;font-size:18.30px;color:#000;letter-spacing:0.825px;">5.104</div>
<div class="t" style="left:855.50px;top:958.00px;font-size:18.30px;color:#000;letter-spacing:0.600px;">QA 3</div>
<div class="t" style="left:1232.00px;top:958.00px;font-size:18.30px;color:#000;letter-spacing:0.844px;">05/06/2023</div>
<div class="t" style="left:1578.00px;top:958.00px;font-size:18.30px;color:#000;">0</div>
<div class="t" style="left:1630.70px;top:958.00px;font-size:18.30px;color:#000;">0,00</div>
<div class="t clip" style="left:154.70px;top:1012.00px;font-size:16.30px;color:#000;letter-spacing:-0.500px;">NFC-E</div>
<div class="t clip" style="left:430.70px;top:1012.00px;font-size:18.30px;color:#000;letter-spacing:0.500px;">908619422</div>
<div class="t clip" style="left:582.40px;top:1012.00px;font-size:18.30px;color:#000;letter-spacing:1.000px;">89</div>
<div class="t clip" style="left:703.70px;top:1012.00px;font-size:18.30px;color:#000;letter-spacing:0.825px;">5.104</div>
<div class="t clip" style="left:855.50px;top:1012.00px;font-size:18.30px;color:#000;letter-spacing:0.600px;">QA 3</div>
<div class="t clip" style="left:1232.00px;top:1012.00px;font-size:18.30px;color:#000;letter-spacing:0.844px;">05/06/2023</div>
<div class="t clip" style="left:1578.00px;top:1012.00px;font-size:18.30px;color:#000;">1</div>
<div class="t clip" style="left:1620.70px;top:1012.00px;font-size:18.30px;color:#000;">80,00</div>
<div class="t" style="left:1773.50px;top:118.50px;font-size:19.20px;color:#eef3fb;letter-spacing:0.019px;text-shadow:0 0 1px rgba(255,255,255,.35);">Pesquisar (F3)</div>
<div class="t" style="left:1793.50px;top:261.00px;font-size:19.20px;color:#eef3fb;letter-spacing:0.000px;text-shadow:0 0 1px rgba(255,255,255,.35);">Novo (F5)</div>
<div class="t" style="left:1785.75px;top:407.75px;font-size:19.20px;color:#eef3fb;letter-spacing:0.295px;text-shadow:0 0 1px rgba(255,255,255,.35);">Alterar (F2)</div>
<div class="t" style="left:1776.00px;top:551.50px;font-size:19.20px;color:#eef3fb;letter-spacing:0.667px;text-shadow:0 0 1px rgba(255,255,255,.35);">Imprimir (F9)</div>
<div class="t" style="left:1777.75px;top:697.00px;font-size:19.20px;color:#eef3fb;letter-spacing:0.021px;text-shadow:0 0 1px rgba(255,255,255,.35);">Cancelar (F8)</div>
<div class="t" style="left:1784.75px;top:841.00px;font-size:19.20px;color:#eef3fb;letter-spacing:0.225px;text-shadow:0 0 1px rgba(255,255,255,.35);">Limpar (F7)</div>
<div class="t" style="left:1792.25px;top:986.00px;font-size:19.20px;color:#eef3fb;letter-spacing:0.389px;text-shadow:0 0 1px rgba(255,255,255,.35);">Sair (F11)</div>
<div class="t" style="left:1825.25px;top:1025.25px;font-size:15.50px;color:#3a63a8;letter-spacing:0.542px;">Suporte</div>
<div class="t" style="left:1802.75px;top:1048.50px;font-size:15.50px;color:#3a63a8;letter-spacing:0.558px;">(11) 2103 4321</div>
<div class="t" style="left:1740.26px;top:1050.50px;font-size:30.50px;color:#222;transform:scaleX(0.5685);">Linx</div>
<div class="a" style="left:885px;top:892px;width:103px;height:28px;background:#fff;border-radius:4px"></div>
</body></html>
